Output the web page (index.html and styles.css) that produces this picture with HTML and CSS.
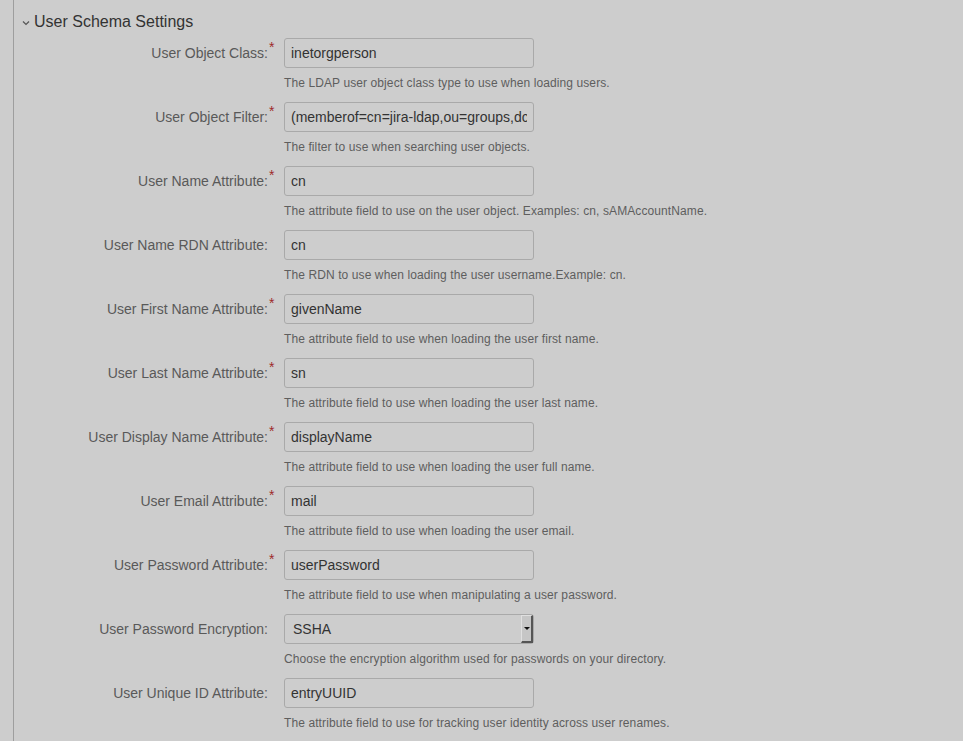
FILE: index.html
```html
<!DOCTYPE html>
<html lang="en">
<head>
    <meta charset="UTF-8">
    <title>User Schema Settings</title>
    <link rel="stylesheet" href="styles.css">
</head>
<body>
    <div class="page">
        <h3 class="section-title">
            <svg class="chevron" width="8" height="6" viewBox="0 0 8 6"><path d="M1 1.5 L4 4.5 L7 1.5" fill="none" stroke="#555" stroke-width="1.2"/></svg>
            User Schema Settings
        </h3>

        <div class="field-group">
            <label class="label">User Object Class:<span class="required">*</span></label>
            <div class="field">
                <input type="text" class="text" value="inetorgperson">
                <div class="description">The LDAP user object class type to use when loading users.</div>
            </div>
        </div>

        <div class="field-group">
            <label class="label">User Object Filter:<span class="required">*</span></label>
            <div class="field">
                <input type="text" class="text" value="(memberof=cn=jira-ldap,ou=groups,dc=example,dc=com)">
                <div class="description">The filter to use when searching user objects.</div>
            </div>
        </div>

        <div class="field-group">
            <label class="label">User Name Attribute:<span class="required">*</span></label>
            <div class="field">
                <input type="text" class="text" value="cn">
                <div class="description">The attribute field to use on the user object. Examples: cn, sAMAccountName.</div>
            </div>
        </div>

        <div class="field-group">
            <label class="label">User Name RDN Attribute:</label>
            <div class="field">
                <input type="text" class="text" value="cn">
                <div class="description">The RDN to use when loading the user username.Example: cn.</div>
            </div>
        </div>

        <div class="field-group">
            <label class="label">User First Name Attribute:<span class="required">*</span></label>
            <div class="field">
                <input type="text" class="text" value="givenName">
                <div class="description">The attribute field to use when loading the user first name.</div>
            </div>
        </div>

        <div class="field-group">
            <label class="label">User Last Name Attribute:<span class="required">*</span></label>
            <div class="field">
                <input type="text" class="text" value="sn">
                <div class="description">The attribute field to use when loading the user last name.</div>
            </div>
        </div>

        <div class="field-group">
            <label class="label">User Display Name Attribute:<span class="required">*</span></label>
            <div class="field">
                <input type="text" class="text" value="displayName">
                <div class="description">The attribute field to use when loading the user full name.</div>
            </div>
        </div>

        <div class="field-group">
            <label class="label">User Email Attribute:<span class="required">*</span></label>
            <div class="field">
                <input type="text" class="text" value="mail">
                <div class="description">The attribute field to use when loading the user email.</div>
            </div>
        </div>

        <div class="field-group">
            <label class="label">User Password Attribute:<span class="required">*</span></label>
            <div class="field">
                <input type="text" class="text" value="userPassword">
                <div class="description">The attribute field to use when manipulating a user password.</div>
            </div>
        </div>

        <div class="field-group">
            <label class="label">User Password Encryption:</label>
            <div class="field">
                <div class="select">
                    <span class="select-value">SSHA</span>
                    <span class="select-button"><span class="arrow"></span></span>
                </div>
                <div class="description">Choose the encryption algorithm used for passwords on your directory.</div>
            </div>
        </div>

        <div class="field-group">
            <label class="label">User Unique ID Attribute:</label>
            <div class="field">
                <input type="text" class="text" value="entryUUID">
                <div class="description">The attribute field to use for tracking user identity across user renames.</div>
            </div>
        </div>
    </div>
</body>
</html>
```

FILE: styles.css
```css
html, body {
    margin: 0;
    padding: 0;
    background-color: #cdcdcd;
}

body {
    font-family: 'Liberation Sans', Arial, sans-serif;
    color: #333;
    height: 741px;
    overflow: hidden;
}

/* 左の区切り線 */
.page {
    margin-left: 13px;
    border-left: 1px solid #9e9e9e;
    min-height: 741px;
    padding-top: 11px;
}

/* 見出し */
.section-title {
    margin: 0 0 5px 0;
    padding-left: 8px;
    font-size: 16px;
    font-weight: normal;
    line-height: 22px;
    color: #333;
    display: flex;
    align-items: center;
}

.chevron {
    margin-right: 4px;
    margin-top: 2px;
}

/* フォーム行 */
.field-group {
    display: flex;
    align-items: flex-start;
    height: 64px;
}

.label {
    position: relative;
    width: 254px;
    flex: none;
    text-align: right;
    font-size: 14px;
    color: #595959;
    line-height: 30px;
}

.required {
    position: absolute;
    top: -6px;
    margin-left: 1px;
    color: #9e2a2a;
    font-size: 14px;
}

.field {
    margin-left: 16px;
}

input.text {
    box-sizing: border-box;
    width: 250px;
    height: 30px;
    padding: 0 6px;
    border: 1px solid #a9a9a9;
    border-radius: 3px;
    background-color: #cdcdcd;
    font-family: 'Liberation Sans', Arial, sans-serif;
    font-size: 14px;
    color: #333;
    display: block;
}

.description {
    margin-top: 7px;
    font-size: 12px;
    line-height: 16px;
    letter-spacing: 0.1px;
    color: #5e5e5e;
}

/* セレクト */
.select {
    box-sizing: border-box;
    width: 250px;
    height: 30px;
    border: 1px solid #a9a9a9;
    border-radius: 3px;
    display: flex;
    align-items: center;
    justify-content: space-between;
}

.select-value {
    padding-left: 8px;
    font-size: 14px;
    color: #333;
}

.select-button {
    box-sizing: border-box;
    width: 12px;
    height: 28px;
    background-color: #c6c6c6;
    border-left: 1px solid #e0e0e0;
    border-top: 1px solid #e0e0e0;
    border-right: 2px solid #555;
    border-bottom: 2px solid #555;
    display: flex;
    align-items: center;
    justify-content: center;
}

.arrow {
    width: 0;
    height: 0;
    border-left: 3px solid transparent;
    border-right: 3px solid transparent;
    border-top: 3px solid #111;
}
```
